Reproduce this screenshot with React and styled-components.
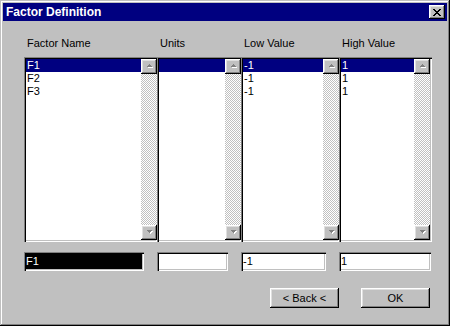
import React from "react";
import styled, { createGlobalStyle } from "styled-components";

const columns = [
  { label: "Factor Name", width: 133, items: ["F1", "F2", "F3"], edit: "F1", editWidth: 120, active: true },
  { label: "Units", width: 84, items: [""], edit: "", editWidth: 71 },
  { label: "Low Value", width: 98, items: ["-1", "-1", "-1"], edit: "-1", editWidth: 85 },
  { label: "High Value", width: 93, items: ["1", "1", "1"], edit: "1", editWidth: 92, last: true },
];

const sunken =
  "inset 1px 1px #808080, inset 2px 2px #000, inset -1px -1px #fff, inset -2px -2px #c0c0c0";
const raised =
  "inset -1px -1px #000, inset 1px 1px #fff, inset -2px -2px #808080, inset 2px 2px #dfdfdf";

const ArrowUp = () => (
  <svg width="7" height="5" shapeRendering="crispEdges">
    <rect x="4" y="1" width="1" height="1" fill="#fff" />
    <rect x="3" y="2" width="3" height="1" fill="#fff" />
    <rect x="2" y="3" width="5" height="1" fill="#fff" />
    <rect x="3" y="0" width="1" height="1" fill="#808080" />
    <rect x="2" y="1" width="3" height="1" fill="#808080" />
    <rect x="1" y="2" width="5" height="1" fill="#808080" />
  </svg>
);

const ArrowDown = () => (
  <svg width="7" height="5" shapeRendering="crispEdges">
    <rect x="2" y="1" width="5" height="1" fill="#fff" />
    <rect x="3" y="2" width="3" height="1" fill="#fff" />
    <rect x="4" y="3" width="1" height="1" fill="#fff" />
    <rect x="1" y="0" width="5" height="1" fill="#808080" />
    <rect x="2" y="1" width="3" height="1" fill="#808080" />
    <rect x="3" y="2" width="1" height="1" fill="#808080" />
  </svg>
);

const CloseGlyph = () => (
  <svg width="8" height="7" shapeRendering="crispEdges">
    <path
      fill="#000"
      d="M0 0h2v1H0zM6 0h2v1H6zM1 1h2v1H1zM5 1h2v1H5zM2 2h4v1H2zM3 3h2v1H3zM2 4h4v1H2zM1 5h2v1H1zM5 5h2v1H5zM0 6h2v1H0zM6 6h2v1H6z"
    />
  </svg>
);

const App = () => {
  return (
    <>
      <GlobalStyle />
      <Window>
        <TitleBar>
          <Title>Factor Definition</Title>
          <CloseButton>
            <CloseGlyph />
          </CloseButton>
        </TitleBar>
        <Body>
          <Grid>
            {columns.map((c) => (
              <Label key={c.label}>{c.label}</Label>
            ))}
            {columns.map((c) => (
              <ListBox key={c.label} $last={c.last}>
                <ListItems>
                  {c.items.map((it, i) => (
                    <Item key={i} $selected={i === 0}>
                      {it}
                    </Item>
                  ))}
                </ListItems>
                <ScrollBar>
                  <ScrollButton>
                    <ArrowUp />
                  </ScrollButton>
                  <Track />
                  <ScrollButton>
                    <ArrowDown />
                  </ScrollButton>
                </ScrollBar>
              </ListBox>
            ))}
            {columns.map((c) => (
              <Edit key={c.label} $width={c.editWidth} $active={c.active}>
                {c.edit}
              </Edit>
            ))}
          </Grid>
          <ButtonRow>
            <Button>&lt; Back &lt;</Button>
            <Button>OK</Button>
          </ButtonRow>
        </Body>
      </Window>
    </>
  );
};

export default App;

const GlobalStyle = createGlobalStyle`
  html, body {
    margin: 0;
    padding: 0;
    background: #c0c0c0;
  }
  body {
    font-family: "Liberation Sans", Arial, sans-serif;
    font-size: 11px;
    color: #000;
  }
`;

const Window = styled.div`
  width: 450px;
  height: 326px;
  box-sizing: border-box;
  padding: 3px;
  background: #c0c0c0;
  box-shadow: inset -1px -1px #000, inset 1px 1px #c0c0c0, inset -2px -2px #808080,
    inset 2px 2px #fff;
  display: flex;
  flex-direction: column;
`;

const TitleBar = styled.div`
  height: 18px;
  background: #000080;
  display: flex;
  align-items: center;
  justify-content: space-between;
  padding: 0 2px 0 3px;
`;

const Title = styled.span`
  color: #fff;
  font-weight: bold;
  font-size: 12px;
  line-height: 18px;
`;

const CloseButton = styled.div`
  width: 16px;
  height: 14px;
  background: #c0c0c0;
  box-shadow: ${raised};
  display: flex;
  align-items: center;
  justify-content: center;
  svg {
    margin-left: -1px;
  }
`;

const Body = styled.div`
  flex: 1;
  padding: 16px 0 0 21px;
`;

const Grid = styled.div`
  display: grid;
  grid-template-columns: 133px 84px 98px 93px;
  align-items: start;
`;

const Label = styled.div`
  height: 13px;
  line-height: 13px;
  padding-left: 3px;
  white-space: nowrap;
`;

const ListBox = styled.div`
  margin-top: 7px;
  height: 185px;
  display: flex;
  box-sizing: border-box;
  background: #fff;
  padding: 2px ${(p) => (p.$last ? "2px" : "0")} 2px 2px;
  box-shadow: ${sunken};
`;

const ListItems = styled.div`
  flex: 1;
  min-width: 0;
`;

const Item = styled.div`
  height: 13px;
  line-height: 13px;
  padding-left: 1px;
  white-space: nowrap;
  background: ${(p) => (p.$selected ? "#000080" : "transparent")};
  color: ${(p) => (p.$selected ? "#fff" : "#000")};
`;

const ScrollBar = styled.div`
  width: 16px;
  display: flex;
  flex-direction: column;
`;

const ScrollButton = styled.div`
  height: 15px;
  background: #c0c0c0;
  box-shadow: ${raised};
  display: flex;
  align-items: center;
  justify-content: center;
`;

const Track = styled.div`
  flex: 1;
  background-color: #fff;
  background-image: conic-gradient(#c0c0c0 25%, #fff 0 50%, #c0c0c0 0 75%, #fff 0);
  background-size: 2px 2px;
`;

const Edit = styled.div`
  margin-top: 10px;
  width: ${(p) => p.$width}px;
  height: 19px;
  box-sizing: border-box;
  padding: 2px 0 0 2px;
  line-height: 15px;
  background: ${(p) => (p.$active ? "#000" : "#fff")};
  color: ${(p) => (p.$active ? "#fff" : "#000")};
  box-shadow: ${sunken};
`;

const ButtonRow = styled.div`
  margin-top: 17px;
  display: flex;
  justify-content: flex-end;
  gap: 22px;
  padding-right: 17px;
`;

const Button = styled.div`
  width: 69px;
  height: 20px;
  box-sizing: border-box;
  background: #c0c0c0;
  box-shadow: ${raised};
  display: flex;
  align-items: center;
  justify-content: center;
  line-height: 13px;
`;
